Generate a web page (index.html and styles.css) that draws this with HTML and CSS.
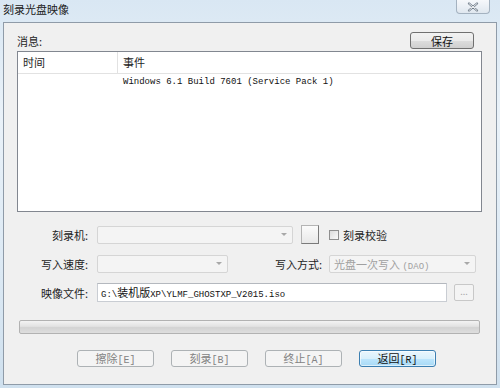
FILE: index.html
```html
<!DOCTYPE html>
<html>
<head>
  <meta charset="utf-8">
  <title>刻录光盘映像</title>
  <link rel="stylesheet" href="styles.css">
</head>
<body>

  <div class="window">
    <div class="titlebar">
      <span class="title">刻录光盘映像</span>
      <span class="close">
        <svg width="12" height="10" viewBox="0 0 12 10">
          <path d="M2 1.5 L10 8.5 M10 1.5 L2 8.5" stroke="#6b7886" stroke-width="2.2" stroke-linecap="round" fill="none"/>
          <path d="M2 1.5 L10 8.5 M10 1.5 L2 8.5" stroke="#fdfdfd" stroke-width="0.9" stroke-linecap="round" fill="none"/>
        </svg>
      </span>
    </div>

    <div class="client">
      <div class="msg-head">
        <span>消息:</span>
        <button class="btn save">保存</button>
      </div>

      <div class="list">
        <div class="list-head">
          <div class="col-time">时间</div>
          <div class="col-event">事件</div>
        </div>
        <div class="list-row">
          <div class="col-time"></div>
          <div class="col-event en">Windows 6.1 Build 7601 (Service Pack 1)</div>
        </div>
      </div>

      <div class="field first">
        <label class="lbl">刻录机:</label>
        <div class="combo burner"><span></span><span class="arrow"></span></div>
        <span class="mini-btn"></span>
        <span class="check"></span>
        <span>刻录校验</span>
      </div>

      <div class="field">
        <label class="lbl">写入速度:</label>
        <div class="combo speed"><span></span><span class="arrow"></span></div>
        <label class="lbl2">写入方式:</label>
        <div class="combo mode"><span>光盘一次写入 <span class="en">(DAO)</span></span><span class="arrow"></span></div>
      </div>

      <div class="field">
        <label class="lbl">映像文件:</label>
        <div class="textbox"><span class="en">G:\</span>装机版<span class="en">XP\YLMF_GHOSTXP_V2015.iso</span></div>
        <span class="dots">...</span>
      </div>

      <div class="progress"></div>

      <div class="actions">
        <button class="btn" disabled>擦除<span class="en">[E]</span></button>
        <button class="btn" disabled>刻录<span class="en">[B]</span></button>
        <button class="btn" disabled>终止<span class="en">[A]</span></button>
        <button class="btn primary">返回<span class="en">[R]</span></button>
      </div>
    </div>
  </div>

</body>
</html>
```

FILE: styles.css
```css
* {
  box-sizing: border-box;
}
body {
  margin: 0;
  font-family: "Noto Sans CJK SC", sans-serif;
  font-size: 11px;
  color: #1e1e1e;
}
.en {
  font-family: "Liberation Mono", monospace;
  font-size: 9px;
}
.window {
  width: 500px;
  height: 388px;
  background: linear-gradient(180deg, #d9e7f3 0%, #eaf2f9 30%, #dce9f4 70%, #cfe0ee 100%);
  overflow: hidden;
}
.titlebar {
  height: 22px;
  display: flex;
  align-items: flex-start;
}
.title {
  padding: 2px 0 0 3px;
  line-height: 14px;
  color: #222;
}
.close {
  margin: 0 10px 0 auto;
  width: 34px;
  height: 14px;
  border: 1px solid #a4b2c0;
  border-top: none;
  border-radius: 0 0 4px 4px;
  background: linear-gradient(#f6f8fb, #dfe7ef);
  display: flex;
  align-items: center;
  justify-content: center;
}
.client {
  margin: 0 3px;
  height: 363px;
  border: 1px solid #8f9ba8;
  background: #f0f0f0;
  padding: 9px 14px 0 13px;
}
.msg-head {
  display: flex;
  justify-content: space-between;
  align-items: center;
  height: 17px;
}
.btn {
  font-family: inherit;
  font-size: 11px;
  height: 17px;
  padding: 0;
  border: 1px solid #adb2b5;
  border-radius: 3px;
  background: #f4f4f4;
  color: #838383;
  line-height: 14px;
}
.btn .en {
  font-size: 10px;
}
.save {
  width: 64px;
  margin-right: 8px;
  border-color: #707070;
  color: #111;
  background: linear-gradient(#f2f2f2, #ebebeb 50%, #dddddd 51%, #cfcfcf);
}
.list {
  margin-top: 2px;
  height: 161px;
  border: 1px solid #828790;
  background: white;
}
.list-head {
  display: flex;
  height: 22px;
  line-height: 21px;
  border-bottom: 1px solid #e2e2e2;
}
.list-head .col-time {
  border-right: 1px solid #e2e2e2;
}
.list-row {
  display: flex;
  line-height: 16px;
  color: #111;
}
.col-time {
  width: 100px;
  padding-left: 5px;
}
.col-event {
  padding-left: 5px;
}
.field {
  display: flex;
  align-items: center;
  height: 19px;
  margin-top: 10px;
}
.field.first {
  margin-top: 13px;
}
.lbl {
  width: 71px;
  margin-right: 9px;
  text-align: right;
}
.lbl2 {
  width: 94px;
  margin-right: 7px;
  text-align: right;
}
.combo {
  height: 18px;
  border: 1px solid #d5d5d5;
  border-radius: 2px;
  background: #f4f4f4;
  display: flex;
  align-items: center;
  justify-content: space-between;
  padding: 0 5px 0 4px;
  color: #a0a0a0;
}
.arrow {
  width: 0;
  height: 0;
  border-left: 3px solid transparent;
  border-right: 3px solid transparent;
  border-top: 3px solid #a8a8a8;
}
.burner {
  width: 196px;
  margin-right: 8px;
}
.speed {
  width: 131px;
}
.mode {
  width: 147px;
}
.mini-btn {
  width: 18px;
  height: 19px;
  border: 1px solid #b4b4b4;
  border-right-color: #7a7a7a;
  border-bottom-color: #7a7a7a;
  background: linear-gradient(#fbfbfb, #e8e8e8);
  margin-right: 10px;
}
.check {
  width: 10px;
  height: 10px;
  border: 1px solid #8f8f8f;
  background: linear-gradient(135deg, #dcdcdc, #fafafa);
  margin-right: 4px;
}
.textbox {
  width: 350px;
  height: 19px;
  border: 1px solid #c9cdd3;
  border-top-color: #b4b8be;
  background: white;
  padding-left: 3px;
  line-height: 17px;
  color: #111;
}
.dots {
  width: 20px;
  height: 17px;
  margin-left: 7px;
  border: 1px solid #c8c8c8;
  border-radius: 2px;
  background: #f4f4f4;
  color: #a8a8a8;
  text-align: center;
  line-height: 14px;
  font-size: 9px;
}
.progress {
  margin: 18px 2px 0;
  height: 14px;
  border: 1px solid #b2b2b2;
  border-radius: 2px;
  background: linear-gradient(#f3f3f3, #e2e2e2 45%, #d3d3d3 55%, #dedede);
}
.actions {
  display: flex;
  gap: 17px;
  margin-top: 16px;
  padding-left: 60px;
}
.actions .btn {
  width: 77px;
}
.primary {
  border-color: #3c7fb1;
  color: #111;
  background: linear-gradient(#eaf6fd, #d9f0fc 50%, #bee6fd 51%, #a7d9f5);
  box-shadow: inset 0 0 0 1px rgba(255,255,255,0.6);
}
```
